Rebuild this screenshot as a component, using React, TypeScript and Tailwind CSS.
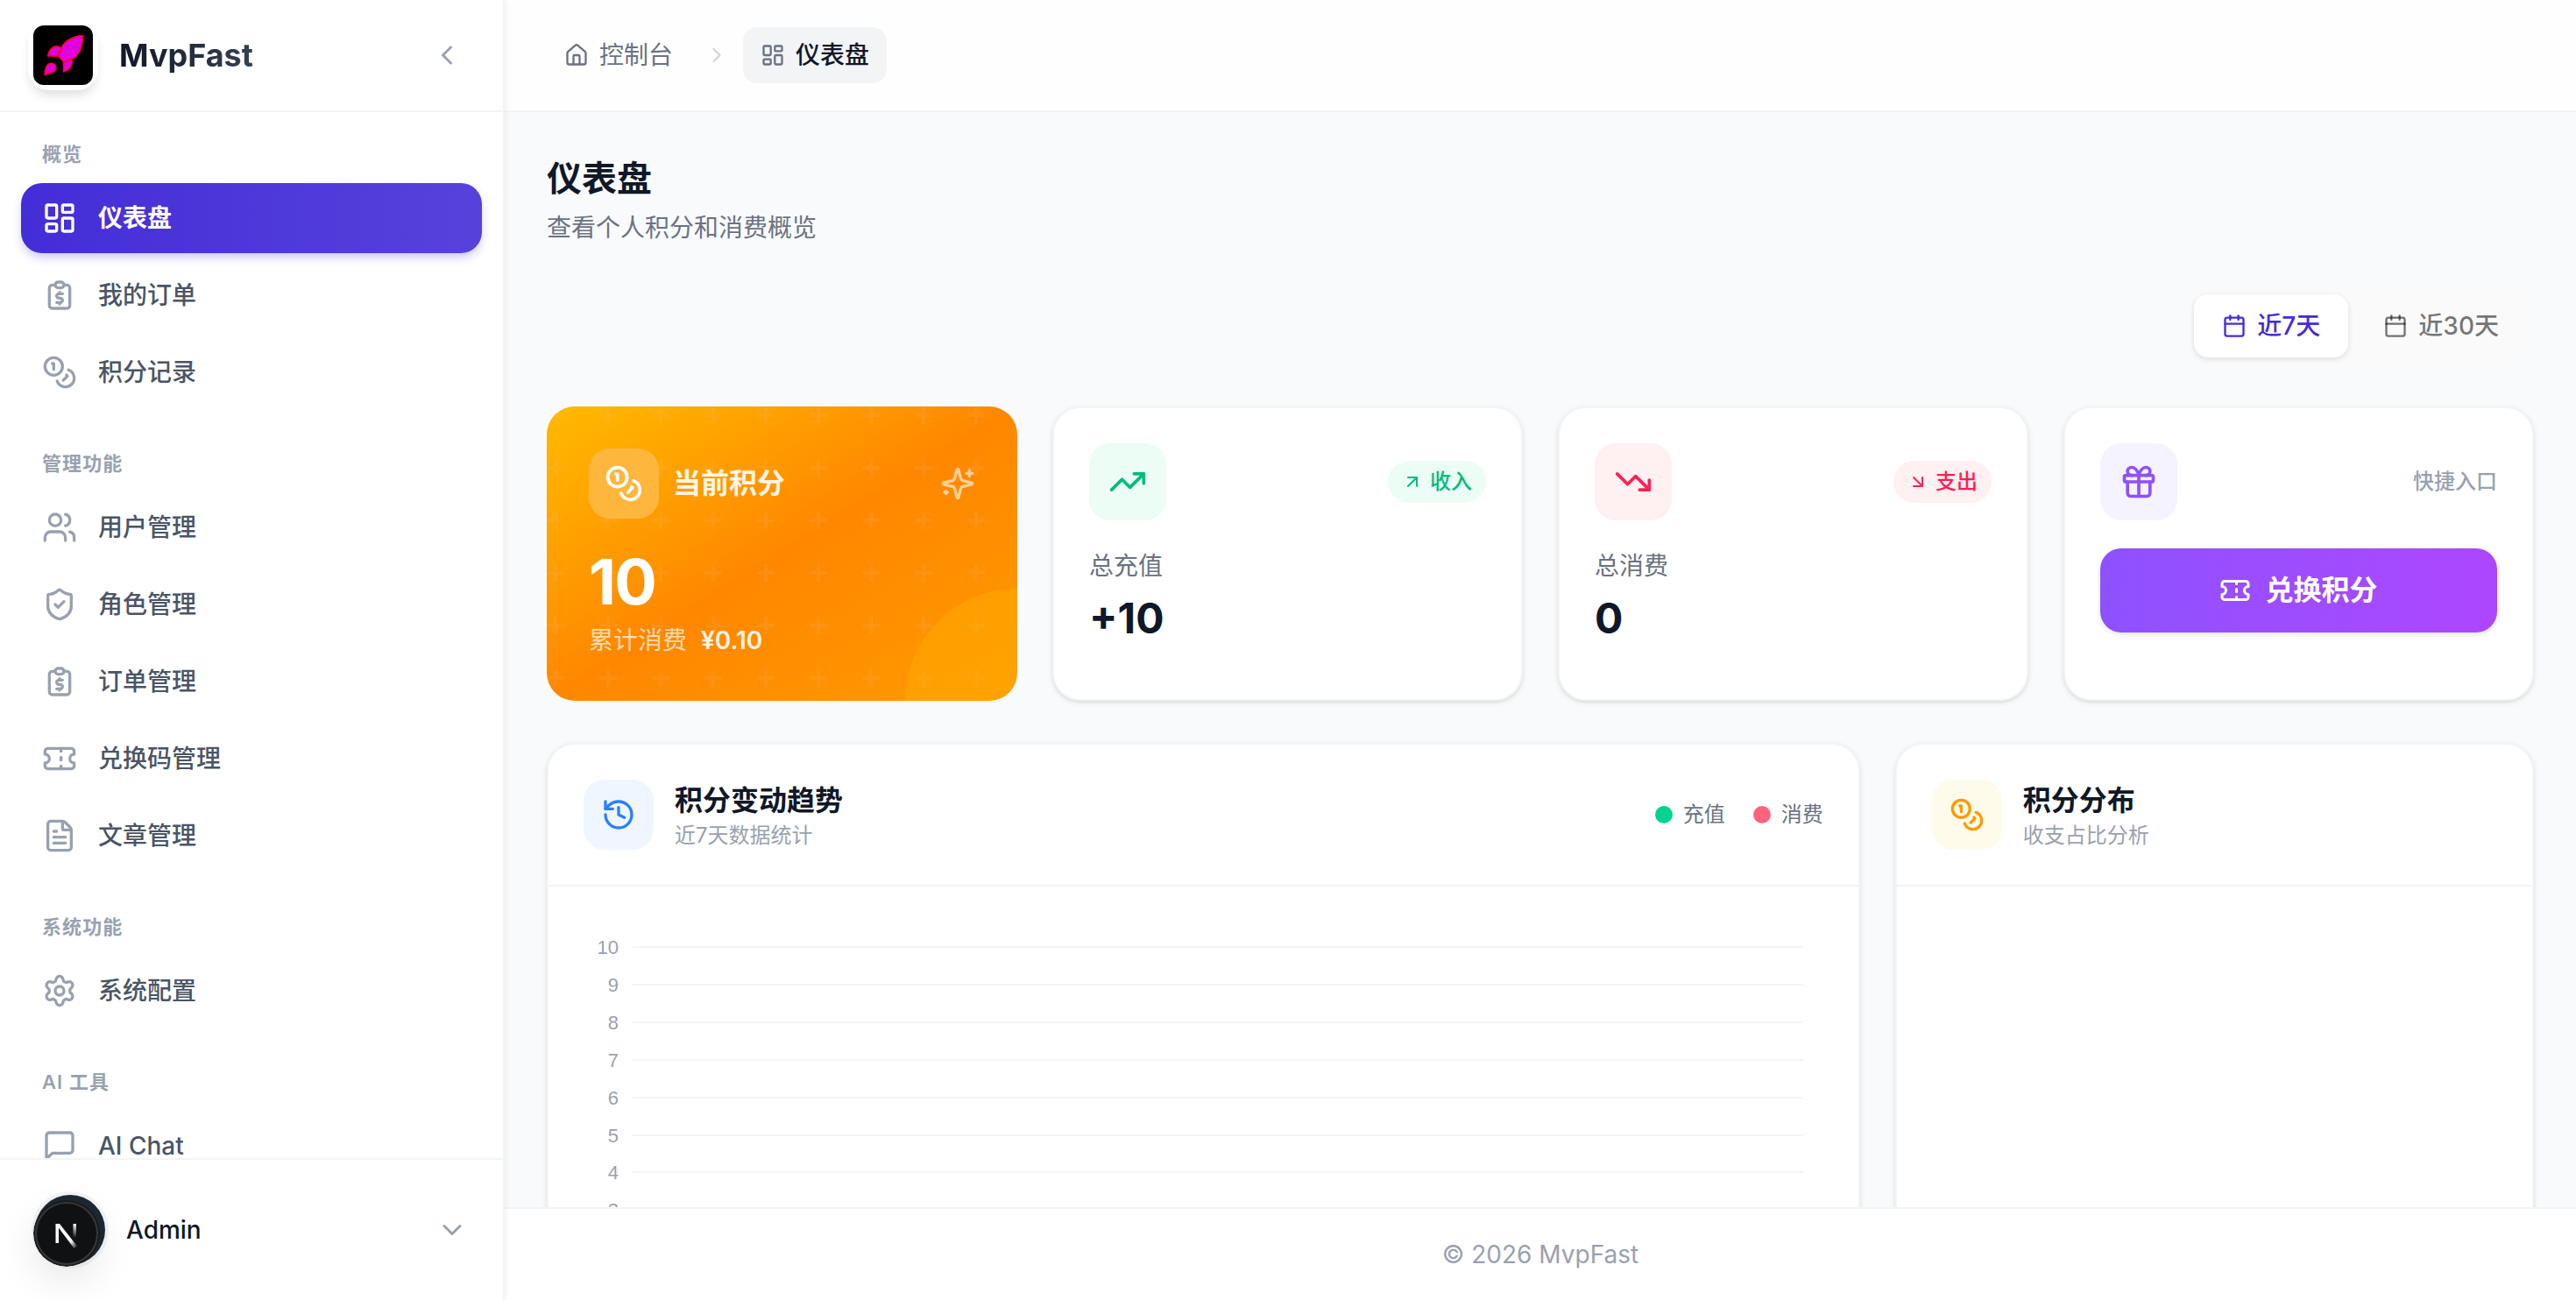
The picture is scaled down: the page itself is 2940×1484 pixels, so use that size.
import type { ComponentType, ReactNode } from 'react'
import {
  ArrowDownRight,
  ArrowUpRight,
  Calendar,
  ChevronDown,
  ChevronLeft,
  ChevronRight,
  Coins,
  FileText,
  Gift,
  History,
  House,
  LayoutDashboard,
  Settings,
  ShieldCheck,
  Ticket,
  TrendingDown,
  TrendingUp,
} from 'lucide-react'
import clsx from 'clsx'

type IconProps = { className?: string }

type Section = {
  title: string
  items: { label: string; icon: ComponentType<IconProps>; active?: boolean }[]
}

function StrokeIcon({ className, children }: { className?: string; children: ReactNode }) {
  return (
    <svg
      viewBox="0 0 24 24"
      fill="none"
      stroke="currentColor"
      strokeWidth={2}
      strokeLinecap="round"
      strokeLinejoin="round"
      className={className}
    >
      {children}
    </svg>
  )
}

function OrderIcon({ className }: IconProps) {
  return (
    <StrokeIcon className={className}>
      <path d="M9 5H7a2 2 0 0 0-2 2v12a2 2 0 0 0 2 2h10a2 2 0 0 0 2-2V7a2 2 0 0 0-2-2h-2" />
      <rect x="9" y="3" width="6" height="4" rx="2" />
      <path d="M14 11h-2.5a1.5 1.5 0 0 0 0 3h1a1.5 1.5 0 0 1 0 3H10" />
      <path d="M12 17v1m0-8v1" />
    </StrokeIcon>
  )
}

function UsersIcon({ className }: IconProps) {
  return (
    <StrokeIcon className={className}>
      <path d="M16 21v-2a4 4 0 0 0-4-4H6a4 4 0 0 0-4 4v2" />
      <circle cx="9" cy="7" r="4" />
      <path d="M22 21v-2a4 4 0 0 0-3-3.87" />
      <path d="M16 3.13a4 4 0 0 1 0 7.75" />
    </StrokeIcon>
  )
}

function ChatIcon({ className }: IconProps) {
  return (
    <StrokeIcon className={className}>
      <path d="M21 15a2 2 0 0 1-2 2H7l-4 4V5a2 2 0 0 1 2-2h14a2 2 0 0 1 2 2z" />
    </StrokeIcon>
  )
}

function SparklesIcon({ className }: IconProps) {
  return (
    <StrokeIcon className={className}>
      <path d="M9.937 15.5A2 2 0 0 0 8.5 14.063l-6.135-1.582a.5.5 0 0 1 0-.962L8.5 9.936A2 2 0 0 0 9.937 8.5l1.582-6.135a.5.5 0 0 1 .963 0L14.063 8.5A2 2 0 0 0 15.5 9.937l6.135 1.581a.5.5 0 0 1 0 .964L15.5 14.063a2 2 0 0 0-1.437 1.437l-1.582 6.135a.5.5 0 0 1-.963 0z" />
      <path d="M20 3v4M22 5h-4M4 17v2M5 18H3" />
    </StrokeIcon>
  )
}

function RocketLogo() {
  return (
    <svg viewBox="0 0 68 68" className="size-[68px] rounded-xl bg-black">
      <g fill="#e000e0" stroke="#ff0018" strokeWidth="1.6" strokeLinejoin="round">
        <path d="M56.500 11.500C45 12.500 34.500 18 31.500 27l-3 8 6.500 7 9-3.500C52.500 35 56.500 23 56.500 11.500z" />
        <path d="M32 26c-4-3.500-9-2.500-12 1-2 2.500-3 5-3.500 8h11z" />
        <path d="M44 38.500c1 5-.5 12-9.500 14.500V42z" />
        <path d="M20.500 43c4 0 6.500 4 5 7.500C23.500 54.500 18 54.500 13 56.500c0-6 2-13 7.500-13.500z" />
      </g>
    </svg>
  )
}

// floating dev badge over the avatar
function DevBadge() {
  return (
    <svg viewBox="0 0 76 76" className="absolute -left-0.5 top-1.5 size-[76px] rounded-full shadow-[0_16px_48px_-4px_rgba(0,0,0,0.12)]">
      <defs>
        <linearGradient id="stem" x1="0" y1="0" x2="0" y2="1">
          <stop offset="0" stopColor="#fff" />
          <stop offset="1" stopColor="#fff" stopOpacity="0" />
        </linearGradient>
        <linearGradient id="diagonal" x1="0" y1="0" x2="1" y2="1">
          <stop offset="0.7" stopColor="#fff" />
          <stop offset="1" stopColor="#fff" stopOpacity="0" />
        </linearGradient>
      </defs>
      <circle cx="38" cy="38" r="38" fill="#18191a" />
      <circle cx="38" cy="38" r="35" fill="#101113" stroke="#383838" strokeWidth="2" />
      <rect x="25.500" y="27" width="3.500" height="22" fill="#fff" />
      <polygon points="25.500,27 30,27 50,52.500 46.500,55" fill="url(#diagonal)" />
      <rect x="45.500" y="27" width="3.500" height="16" fill="url(#stem)" />
    </svg>
  )
}

const sections: Section[] = [
  {
    title: '概览',
    items: [
      { label: '仪表盘', icon: LayoutDashboard, active: true },
      { label: '我的订单', icon: OrderIcon },
      { label: '积分记录', icon: Coins },
    ],
  },
  {
    title: '管理功能',
    items: [
      { label: '用户管理', icon: UsersIcon },
      { label: '角色管理', icon: ShieldCheck },
      { label: '订单管理', icon: OrderIcon },
      { label: '兑换码管理', icon: Ticket },
      { label: '文章管理', icon: FileText },
    ],
  },
  { title: '系统功能', items: [{ label: '系统配置', icon: Settings }] },
  { title: 'AI 工具', items: [{ label: 'AI Chat', icon: ChatIcon }] },
]

function Sidebar() {
  return (
    <aside className="z-10 flex w-[576px] shrink-0 flex-col border-r-2 border-gray-100 bg-white shadow-[2px_0_6px_rgba(0,0,0,0.05)]">
      <div className="flex h-32 shrink-0 items-center justify-between border-b-2 border-gray-100 pl-8 pr-[46px]">
        <div className="flex items-center gap-6">
          <div className="flex size-20 items-center justify-center rounded-3xl bg-white shadow-[0_8px_12px_-2px_rgba(0,0,0,0.12)]">
            <RocketLogo />
          </div>
          <span className="bg-linear-to-r from-gray-900 to-gray-700 bg-clip-text text-[36px] font-bold text-transparent">
            MvpFast
          </span>
        </div>
        <ChevronLeft className="size-9 text-gray-400" />
      </div>

      <nav className="flex min-h-0 flex-1 flex-col gap-12 overflow-hidden px-6 pt-8">
        {sections.map(section => (
          <div key={section.title} className="shrink-0">
            <h3 className="mb-4 px-6 text-[22px] font-semibold leading-[33px] tracking-wider text-gray-400">
              {section.title}
            </h3>
            <div className="flex flex-col gap-2">
              {section.items.map(({ label, icon: Icon, active }) => (
                <a
                  key={label}
                  className={clsx(
                    'flex h-20 items-center gap-6 rounded-3xl px-6 text-[28px]',
                    active
                      ? 'bg-linear-to-r from-indigo-700 to-indigo-700/90 font-semibold text-white shadow-[0_6px_12px_-2px_rgba(67,45,215,0.3)]'
                      : 'font-medium text-gray-600',
                  )}
                >
                  <Icon className={clsx('size-10 shrink-0', !active && 'text-gray-400')} />
                  {label}
                </a>
              ))}
            </div>
          </div>
        ))}
      </nav>

      <div className="flex h-[162px] shrink-0 items-center justify-between border-t-2 border-gray-100 px-10">
        <div className="flex items-center gap-6">
          <div className="relative size-20 rounded-full bg-[#1d2833] ring-4 ring-gray-100">
            <DevBadge />
          </div>
          <span className="text-[28px] font-medium text-gray-900">Admin</span>
        </div>
        <ChevronDown className="size-9 text-gray-400" />
      </div>
    </aside>
  )
}

function Header() {
  return (
    <header className="flex h-32 shrink-0 items-center gap-4 border-b-2 border-gray-100 bg-[#fefefe] px-12 text-[28px]">
      <div className="flex h-16 items-center gap-3 px-5 text-gray-500">
        <House className="size-7" />
        控制台
      </div>
      <ChevronRight className="size-7 text-gray-300" />
      <div className="flex h-16 items-center gap-3 rounded-2xl bg-gray-100 px-5 font-medium text-gray-900">
        <LayoutDashboard className="size-7 text-gray-500" />
        仪表盘
      </div>
    </header>
  )
}

function PointsCard() {
  return (
    <div className="relative h-[336px] overflow-hidden rounded-[32px] bg-linear-to-br from-amber-400 via-[#ff8700] to-[#ff9a00] p-12 text-white">
      <svg className="absolute inset-0 size-full">
        <defs>
          <pattern id="plus" width="60" height="60" patternUnits="userSpaceOnUse">
            <path d="M8 0h4v8h8v4h-8v8H8v-8H0V8h8z" fill="#ffc0a0" fillOpacity="0.11" />
          </pattern>
        </defs>
        <rect width="100%" height="100%" fill="url(#plus)" />
      </svg>
      <div className="absolute -bottom-32 -right-32 size-64 rounded-full bg-amber-400/30" />

      <div className="relative flex h-full flex-col justify-between">
        <div className="flex items-center justify-between">
          <div className="flex items-center gap-4">
            <div className="flex size-20 items-center justify-center rounded-3xl bg-[#ffb63d]">
              <Coins className="size-11" />
            </div>
            <span className="text-[32px] font-semibold text-white/90">当前积分</span>
          </div>
          <SparklesIcon className="size-10 opacity-60" />
        </div>
        <div>
          <div className="mb-2.5 text-[72px] font-bold leading-none tracking-tight">10</div>
          <div className="flex items-center gap-4 text-[28px] leading-[42px]">
            <span className="text-white/70">累计消费</span>
            <span className="font-semibold text-white/90">¥0.10</span>
          </div>
        </div>
      </div>
    </div>
  )
}

const stats = [
  {
    label: '总充值',
    value: '+10',
    tag: '收入',
    icon: TrendingUp,
    arrow: ArrowUpRight,
    tone: 'bg-emerald-50 text-emerald-500',
  },
  {
    label: '总消费',
    value: '0',
    tag: '支出',
    icon: TrendingDown,
    arrow: ArrowDownRight,
    tone: 'bg-[#fff0f1] text-rose-500',
  },
]

const cardClass = 'rounded-[32px] border-2 border-gray-100 bg-white shadow-[0_2px_6px_rgba(0,0,0,0.1),0_2px_4px_-2px_rgba(0,0,0,0.1)]'

function StatCards() {
  return (
    <>
      {stats.map(({ label, value, tag, icon: Icon, arrow: Arrow, tone }) => (
        <div key={label} className={clsx(cardClass, 'p-10')}>
          <div className="mb-8 flex items-center justify-between">
            <div className={clsx('flex size-[88px] items-center justify-center rounded-3xl', tone)}>
              <Icon className="size-11" />
            </div>
            <span className={clsx('flex h-12 items-center gap-2 rounded-full px-4 text-2xl font-medium', tone)}>
              <Arrow className="size-6" />
              {tag}
            </span>
          </div>
          <p className="mb-2 text-[28px] leading-10 text-gray-500">{label}</p>
          <p className="text-5xl font-bold leading-[64px] text-gray-900">{value}</p>
        </div>
      ))}
    </>
  )
}

function RedeemCard() {
  return (
    <div className={clsx(cardClass, 'p-10')}>
      <div className="mb-8 flex items-center justify-between">
        <div className="flex size-[88px] items-center justify-center rounded-3xl bg-violet-50 text-violet-500">
          <Gift className="size-11" />
        </div>
        <span className="text-2xl font-medium text-gray-400">快捷入口</span>
      </div>
      <button className="flex h-24 w-full items-center justify-center gap-4 rounded-3xl bg-linear-to-r from-violet-500 to-purple-500 text-[32px] font-semibold text-white shadow-[0_2px_6px_rgba(0,0,0,0.12)]">
        <Ticket className="size-9" />
        兑换积分
      </button>
    </div>
  )
}

const ticks = [10, 9, 8, 7, 6, 5, 4, 3]

function TrendChart() {
  return (
    <svg className="h-[560px] w-full">
      {ticks.map((tick, i) => {
        const y = Math.round(69 + i * 42.9)
        return (
          <g key={tick}>
            <text
              x="80"
              y={y + 7.5}
              textAnchor="end"
              fill="#99a1af"
              className="font-['Liberation_Sans',Arial,sans-serif] text-[22px]"
            >
              {tick}
            </text>
            <rect x="96" y={y - 1} width="1336" height="2" fill="#f3f4f6" />
          </g>
        )
      })}
    </svg>
  )
}

function PanelHeader({ icon, tone, title, subtitle, children }: {
  icon: ReactNode
  tone: string
  title: string
  subtitle: string
  children?: ReactNode
}) {
  return (
    <div className="flex items-center justify-between border-b-2 border-gray-100 p-10">
      <div className="flex items-center gap-6">
        <div className={clsx('flex size-20 items-center justify-center rounded-3xl', tone)}>{icon}</div>
        <div>
          <h2 className="text-[32px] font-semibold leading-[48px] text-gray-900">{title}</h2>
          <p className="text-2xl leading-8 text-gray-400">{subtitle}</p>
        </div>
      </div>
      {children}
    </div>
  )
}

export default function App() {
  return (
    <div className="flex h-screen w-full overflow-hidden bg-gray-50 font-['Inter','Noto_Sans_CJK_SC',sans-serif]">
      <Sidebar />
      <div className="flex min-w-0 flex-1 flex-col">
        <Header />

        <main className="min-h-0 flex-1 overflow-hidden px-12 pt-12">
          <h1 className="text-[40px] font-bold leading-[56px] text-gray-900">仪表盘</h1>
          <p className="mt-2 text-[28px] leading-10 text-gray-500">查看个人积分和消费概览</p>

          <div className="mt-12 flex justify-end">
            <div className="flex gap-2 rounded-3xl bg-[#fafafa] p-2 text-[28px] font-medium">
              <button className="flex h-[72px] items-center gap-3 rounded-2xl bg-white px-8 text-indigo-700 shadow-[0_2px_6px_rgba(0,0,0,0.12)]">
                <Calendar className="size-7" />
                近7天
              </button>
              <button className="flex h-[72px] items-center gap-3 rounded-2xl px-8 text-black/55">
                <Calendar className="size-7" />
                近30天
              </button>
            </div>
          </div>

          <div className="mt-12 grid grid-cols-4 gap-10">
            <PointsCard />
            <StatCards />
            <RedeemCard />
          </div>

          <div className="mt-12 grid grid-cols-3 gap-10">
            <div className={clsx(cardClass, 'col-span-2')}>
              <PanelHeader
                icon={<History className="size-10" />}
                tone="bg-blue-50 text-blue-500"
                title="积分变动趋势"
                subtitle="近7天数据统计"
              >
                <div className="flex gap-8 text-2xl text-gray-500">
                  <span className="flex items-center gap-3">
                    <i className="size-5 rounded-full bg-emerald-400" />
                    充值
                  </span>
                  <span className="flex items-center gap-3">
                    <i className="size-5 rounded-full bg-rose-400" />
                    消费
                  </span>
                </div>
              </PanelHeader>
              <TrendChart />
            </div>
            <div className={cardClass}>
              <PanelHeader
                icon={<Coins className="size-10" />}
                tone="bg-amber-50 text-amber-500"
                title="积分分布"
                subtitle="收支占比分析"
              />
            </div>
          </div>
        </main>

        <footer className="flex h-[106px] shrink-0 items-center justify-center border-t-2 border-gray-100 bg-white text-[28px] text-gray-400">
          © 2026 MvpFast
        </footer>
      </div>
    </div>
  )
}
